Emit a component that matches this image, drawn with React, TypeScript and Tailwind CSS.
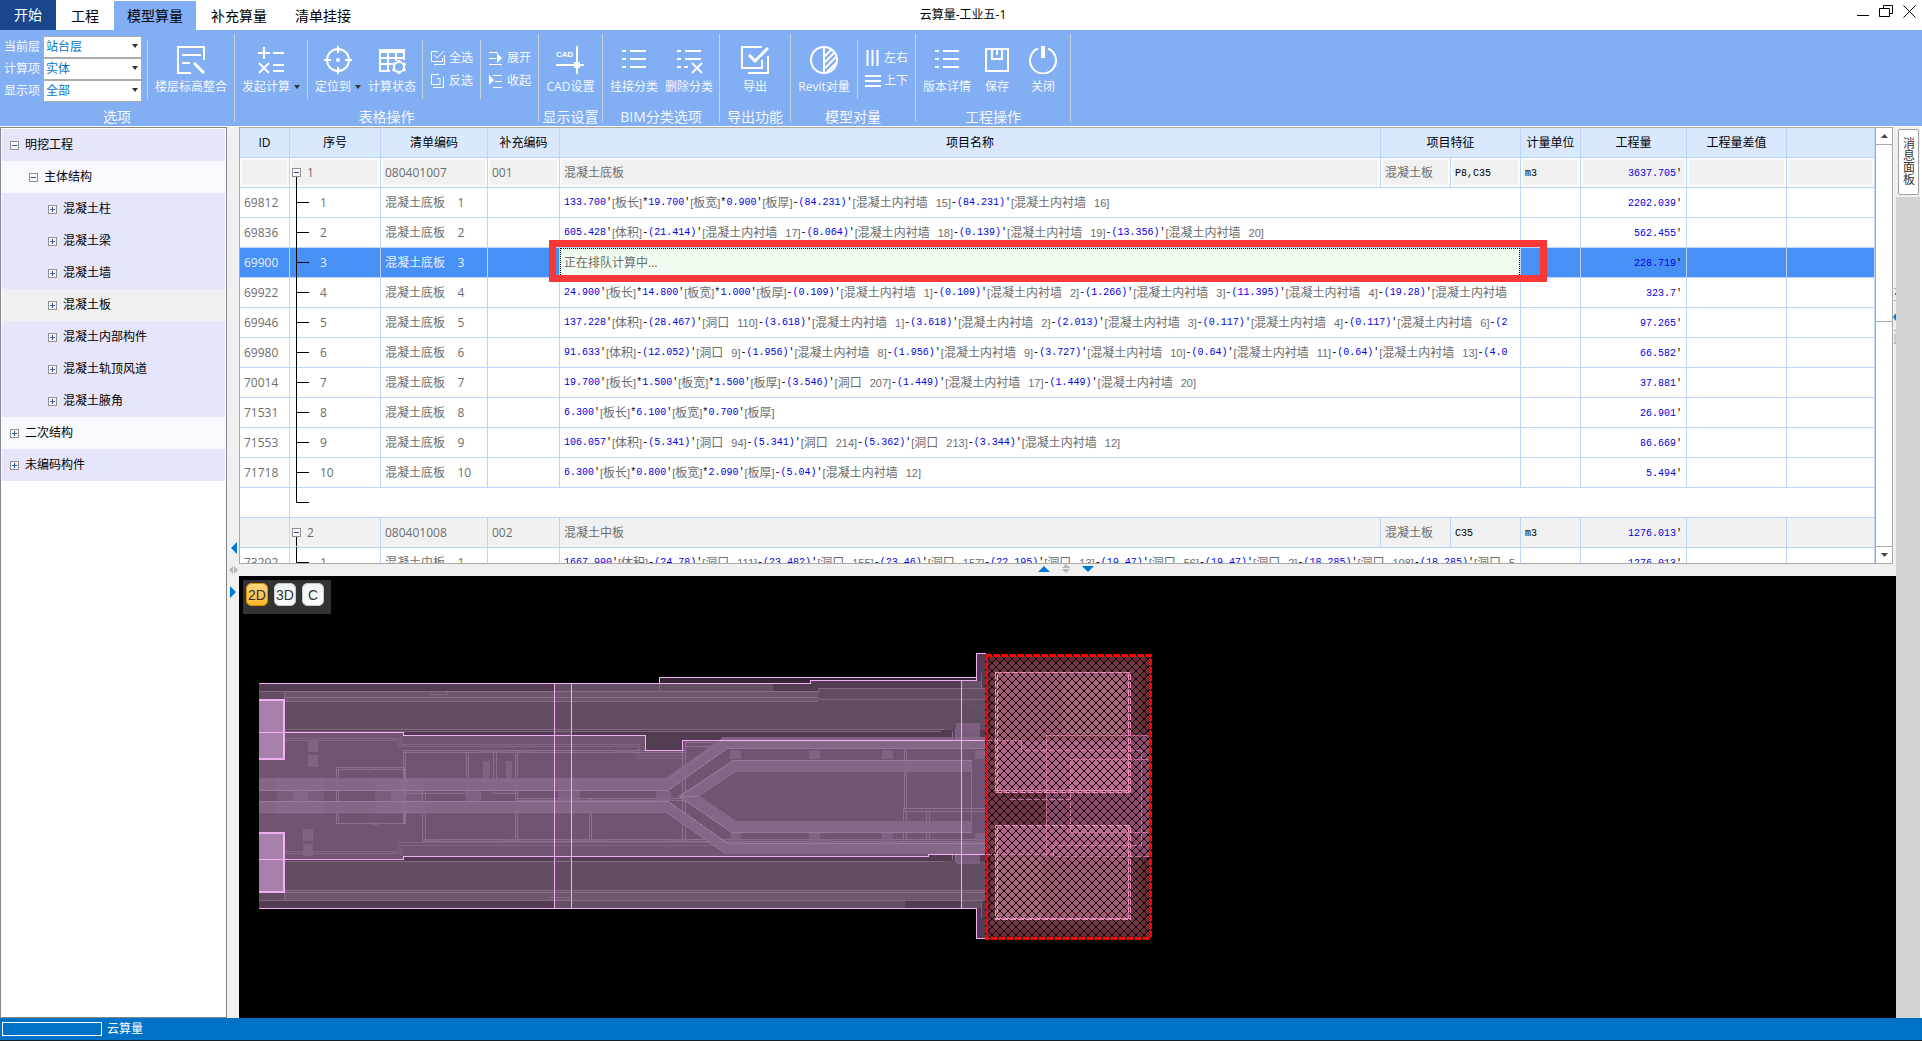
import { ReactNode } from 'react';

interface Row {
  kind: 'group' | 'item' | 'blank';
  id?: string;
  no?: string;
  code?: string;
  extra?: string;
  name?: string;
  part?: string;
  grade?: string;
  unit?: string;
  qty?: string;
  pending?: boolean;
  focused?: boolean;
  last?: boolean;
}

interface TreeNode {
  label: string;
  level: 0 | 1 | 2;
  open?: boolean;
  tone: 'base' | 'light' | 'active';
}

const TREE: TreeNode[] = [
  { label: '明挖工程', level: 0, open: true, tone: 'base' },
  { label: '主体结构', level: 1, open: true, tone: 'light' },
  { label: '混凝土柱', level: 2, tone: 'base' },
  { label: '混凝土梁', level: 2, tone: 'base' },
  { label: '混凝土墙', level: 2, tone: 'base' },
  { label: '混凝土板', level: 2, tone: 'active' },
  { label: '混凝土内部构件', level: 2, tone: 'base' },
  { label: '混凝土轨顶风道', level: 2, tone: 'base' },
  { label: '混凝土腋角', level: 2, tone: 'base' },
  { label: '二次结构', level: 0, tone: 'light' },
  { label: '未编码构件', level: 0, tone: 'base' },
];

const ROWS: Row[] = [
  { kind: 'group', no: '1', code: '080401007', extra: '001', name: '混凝土底板', part: '混凝土板', grade: 'P8,C35', unit: 'm3', qty: '3637.705', focused: true },
  { kind: 'item', id: '69812', no: '1', code: '混凝土底板', name: '133.700′[板长]*19.700′[板宽]*0.900′[板厚]-(84.231)′[混凝土内衬墙 15]-(84.231)′[混凝土内衬墙 16]', qty: '2202.039' },
  { kind: 'item', id: '69836', no: '2', code: '混凝土底板', name: '605.428′[体积]-(21.414)′[混凝土内衬墙 17]-(8.064)′[混凝土内衬墙 18]-(0.139)′[混凝土内衬墙 19]-(13.356)′[混凝土内衬墙 20]', qty: '562.455' },
  { kind: 'item', id: '69900', no: '3', code: '混凝土底板', name: '正在排队计算中...', qty: '228.719', pending: true },
  { kind: 'item', id: '69922', no: '4', code: '混凝土底板', name: '24.900′[板长]*14.800′[板宽]*1.000′[板厚]-(0.109)′[混凝土内衬墙 1]-(0.109)′[混凝土内衬墙 2]-(1.266)′[混凝土内衬墙 3]-(11.395)′[混凝土内衬墙 4]-(19.28)′[混凝土内衬墙', qty: '323.7' },
  { kind: 'item', id: '69946', no: '5', code: '混凝土底板', name: '137.228′[体积]-(28.467)′[洞口 110]-(3.618)′[混凝土内衬墙 1]-(3.618)′[混凝土内衬墙 2]-(2.013)′[混凝土内衬墙 3]-(0.117)′[混凝土内衬墙 4]-(0.117)′[混凝土内衬墙 6]-(2', qty: '97.265' },
  { kind: 'item', id: '69980', no: '6', code: '混凝土底板', name: '91.633′[体积]-(12.052)′[洞口 9]-(1.956)′[混凝土内衬墙 8]-(1.956)′[混凝土内衬墙 9]-(3.727)′[混凝土内衬墙 10]-(0.64)′[混凝土内衬墙 11]-(0.64)′[混凝土内衬墙 13]-(4.0', qty: '66.582' },
  { kind: 'item', id: '70014', no: '7', code: '混凝土底板', name: '19.700′[板长]*1.500′[板宽]*1.500′[板厚]-(3.546)′[洞口 207]-(1.449)′[混凝土内衬墙 17]-(1.449)′[混凝土内衬墙 20]', qty: '37.881' },
  { kind: 'item', id: '71531', no: '8', code: '混凝土底板', name: '6.300′[板长]*6.100′[板宽]*0.700′[板厚]', qty: '26.901' },
  { kind: 'item', id: '71553', no: '9', code: '混凝土底板', name: '106.057′[体积]-(5.341)′[洞口 94]-(5.341)′[洞口 214]-(5.362)′[洞口 213]-(3.344)′[混凝土内衬墙 12]', qty: '86.669' },
  { kind: 'item', id: '71718', no: '10', code: '混凝土底板', name: '6.300′[板长]*0.800′[板宽]*2.090′[板厚]-(5.04)′[混凝土内衬墙 12]', qty: '5.494' },
  { kind: 'blank' },
  { kind: 'group', no: '2', code: '080401008', extra: '002', name: '混凝土中板', part: '混凝土板', grade: 'C35', unit: 'm3', qty: '1276.013' },
  { kind: 'item', id: '73292', no: '1', code: '混凝土中板', name: '1667.990′[体积]-(24.78)′[洞口 111]-(23.482)′[洞口 155]-(23.46)′[洞口 157]-(22.195)′[洞口 13]-(19.47)′[洞口 56]-(19.47)′[洞口 2]-(18.285)′[洞口 108]-(18.285)′[洞口 5', qty: '1276.013', last: true },
];

const MONO = "font-['Liberation_Mono','Noto_Sans_CJK_SC',monospace] text-[10px]";
const CELL = 'h-[30px] border-r border-b border-[#bdd5fa] p-0';

/* ---------- ribbon ---------- */

function Ico({ children, size = 28 }: { children: ReactNode; size?: number }) {
  return (
    <svg width={size} height={size} viewBox={`0 0 ${size} ${size}`} fill="none" stroke="#fff" strokeWidth="2" className="shrink-0" aria-hidden>
      {children}
    </svg>
  );
}

const ICONS: Record<string, ReactNode> = {
  floor: <><path d="M27 14V1H1v26h13M5 9h19M5 17h8" /><path d="M17 17l10 10" strokeWidth="3" /></>,
  calc: <><path d="M7 1v12M1 7h12M16 7h11M16 19h11M16 25h11M2 17l10 10M12 17L2 27" /></>,
  locate: <><circle cx="14" cy="14" r="11" /><path d="M14 0v7M14 21v7M0 14h7M21 14h7" /><circle cx="14" cy="14" r="1" /></>,
  status: (
    <>
      <path d="M1 3h26v4H1z" fill="#fff" stroke="none" />
      <path d="M2 3v22h10M26 3v11M2 12h24M2 18h12M10 6v20M18 6v9" />
      <circle cx="21" cy="21" r="5" />
      <path d="M21 14v2M21 26v2M14.5 17.5l2 1M25.500 23.500l2 1M14.500 24.500l2-1M25.500 18.500l2-1" strokeWidth="3" />
    </>
  ),
  cad: (
    <>
      <path d="M21 0v28M0 19h28" />
      <path d="M18 16h6v6h-6z" fill="#fff" stroke="none" />
      <text x="0" y="11" fontSize="8" fontWeight="700" fill="#fff" stroke="none" fontFamily="Liberation Sans">CAD</text>
    </>
  ),
  list: <path d="M2 5h4M10 5h16M2 13h4M10 13h16M2 21h4M10 21h16" />,
  listDel: <path d="M2 5h4M10 5h16M2 13h4M10 13h16M2 21h4M9 21h4M17 17l10 10M27 17L17 27" />,
  exportBox: <><path d="M21 14v8H1V1h20M27 10v17H7" /><path d="M8 9l6 6L27 2" strokeWidth="3" /></>,
  compare: <><circle cx="14" cy="14" r="13" /><path d="M14 1v26M15 10l6-6M15 16l9-9M15 22l11-11M17 26l9-9" /></>,
  save: <path d="M3 3h22v22H3zM9 3v10h10V3M14 4v5" />,
  power: <><path d="M9 2.500a13 13 0 1 0 10 0" /><path d="M14 0v12" strokeWidth="4" /></>,
};

const SMALL: Record<string, ReactNode> = {
  all: <path d="M8 1.500H1.500v10h11V8M14.500 5v9.500H4M4 5l3 3 7-7" strokeWidth="1" />,
  invert: <path d="M9 1.500H1.500v10h4M7 5.500h3v6H5M13.500 4v10.500H3" strokeWidth="1" />,
  expand: <><path d="M1 2.500h9M1 8.500h7M1 14.500h13" strokeWidth="1" /><path d="M9 3l5 5-5 5z" fill="#fff" stroke="none" /></>,
  collapse: <><path d="M5 2.500h9M7 8.500h7M5 14.500h9M1.500 2v9" strokeWidth="1" /><path d="M1 2l5 5-5 5z" fill="#fff" stroke="none" /></>,
  columns: <path d="M2.500 0v16M7.500 0v16M12.500 0v16" />,
  lines: <path d="M0 3h16M0 8h16M0 13h16" />,
};

function Caret() {
  return (
    <svg width="6" height="4" viewBox="0 0 6 4" aria-hidden>
      <path d="M0 0h6L3 4z" fill="#333" />
    </svg>
  );
}

function BigButton({ icon, label, caret }: { icon: string; label: string; caret?: boolean }) {
  return (
    <button type="button" className="flex flex-col items-center gap-1">
      <Ico>{ICONS[icon]}</Ico>
      <span className="flex items-center gap-1 text-xs leading-[18px] whitespace-nowrap">
        {label}
        {caret && <Caret />}
      </span>
    </button>
  );
}

function SmallButton({ icon, label }: { icon: string; label: string }) {
  return (
    <button type="button" className="flex items-center gap-[3px] text-xs leading-4 whitespace-nowrap">
      <Ico size={16}>{SMALL[icon]}</Ico>
      {label}
    </button>
  );
}

function Divider() {
  return <div className="mt-[6px] h-[59px] w-px bg-[#c9d2e2]" />;
}

function RibbonGroup({ title, width, children }: { title: string; width: string; children: ReactNode }) {
  return (
    <section className={`flex shrink-0 flex-col border-r border-[#c9d2e2] ${width}`}>
      <div className="flex h-[74px] shrink-0">{children}</div>
      <h2 className="h-3.5 text-center text-sm leading-[18px] whitespace-nowrap">{title}</h2>
    </section>
  );
}

function Slot({ width, children }: { width: string; children: ReactNode }) {
  return <div className={`flex shrink-0 justify-center pt-3 ${width}`}>{children}</div>;
}

function Combo({ id, label, value }: { id: string; label: string; value: string }) {
  return (
    <div className="flex h-[22px] items-center">
      <label htmlFor={id} className="w-[39px] text-xs">{label}</label>
      <div className="relative">
        <select id={id} className="block h-[22px] w-[99px] appearance-none border border-[#ababab] bg-white pl-0.5 text-xs leading-4 text-[#0072c6]">
          <option>{value}</option>
        </select>
        <span className="pointer-events-none absolute top-2 right-1 flex">
          <Caret />
        </span>
      </div>
    </div>
  );
}

function Ribbon() {
  return (
    <div className="flex h-24 shrink-0 bg-[#82aef3] py-1 text-[#f4f8ff]">
      <RibbonGroup title="选项" width="w-[235px]">
        <div className="flex w-[147px] flex-col pt-0.5 pl-1">
          <Combo id="floor" label="当前层" value="站台层" />
          <Combo id="calc" label="计算项" value="实体" />
          <Combo id="show" label="显示项" value="全部" />
        </div>
        <Divider />
        <Slot width="w-[86px]"><BigButton icon="floor" label="楼层标高整合" /></Slot>
      </RibbonGroup>
      <RibbonGroup title="表格操作" width="w-[304px]">
        <Slot width="w-[72px]"><BigButton icon="calc" label="发起计算" caret /></Slot>
        <Divider />
        <Slot width="w-[60px]"><BigButton icon="locate" label="定位到" caret /></Slot>
        <Slot width="w-[48px]"><BigButton icon="status" label="计算状态" /></Slot>
        <div className="w-1.5" />
        <Divider />
        <div className="flex w-[57px] flex-col items-center gap-[7px] pt-4">
          <SmallButton icon="all" label="全选" />
          <SmallButton icon="invert" label="反选" />
        </div>
        <Divider />
        <div className="flex w-[57px] flex-col items-center gap-[7px] pt-4">
          <SmallButton icon="expand" label="展开" />
          <SmallButton icon="collapse" label="收起" />
        </div>
      </RibbonGroup>
      <RibbonGroup title="显示设置" width="w-[64px]">
        <Slot width="w-[63px]"><BigButton icon="cad" label="CAD设置" /></Slot>
      </RibbonGroup>
      <RibbonGroup title="BIM分类选项" width="w-[117px]">
        <Slot width="w-[62px]"><BigButton icon="list" label="挂接分类" /></Slot>
        <Slot width="w-[48px]"><BigButton icon="listDel" label="删除分类" /></Slot>
      </RibbonGroup>
      <RibbonGroup title="导出功能" width="w-[71px]">
        <Slot width="w-[70px]"><BigButton icon="exportBox" label="导出" /></Slot>
      </RibbonGroup>
      <RibbonGroup title="模型对量" width="w-[125px]">
        <Slot width="w-[66px]"><BigButton icon="compare" label="Revit对量" /></Slot>
        <Divider />
        <div className="flex w-[57px] flex-col items-center gap-[7px] pt-4">
          <SmallButton icon="columns" label="左右" />
          <SmallButton icon="lines" label="上下" />
        </div>
      </RibbonGroup>
      <RibbonGroup title="工程操作" width="w-[155px]">
        <Slot width="w-[62px]"><BigButton icon="list" label="版本详情" /></Slot>
        <Slot width="w-[38px]"><BigButton icon="save" label="保存" /></Slot>
        <Slot width="w-[54px]"><BigButton icon="power" label="关闭" /></Slot>
      </RibbonGroup>
    </div>
  );
}

/* ---------- title bar ---------- */

function TitleBar() {
  return (
    <header className="grid h-[30px] shrink-0 grid-cols-[1fr_auto_1fr] bg-white text-black">
      <nav className="flex items-end text-sm leading-[26px]">
        <button type="button" className="h-[30px] w-14 bg-[#18478b] text-white">开始</button>
        <button type="button" className="h-[29px] w-[58px]">工程</button>
        <button type="button" className="h-[29px] w-[82px] bg-[#82aef3]">模型算量</button>
        <button type="button" className="h-[29px] w-[86px]">补充算量</button>
        <button type="button" className="h-[29px] w-[82px]">清单挂接</button>
      </nav>
      <h1 className="pl-1 text-xs leading-[30px]">云算量-工业五-1</h1>
      <div className="flex items-start justify-end gap-[9px] pt-[5px] pr-[6px]">
        <button type="button" aria-label="最小化">
          <svg width="13" height="13" viewBox="0 0 13 13"><path d="M0 10.500h12" stroke="#000" /></svg>
        </button>
        <button type="button" aria-label="还原">
          <svg width="15" height="13" viewBox="0 0 15 13" fill="none" stroke="#000"><path d="M.5 3.500h10v8H.500zM4.500 3V.500h9v8H11" /></svg>
        </button>
        <button type="button" aria-label="关闭窗口">
          <svg width="13" height="13" viewBox="0 0 13 13"><path d="M.5.5l12 12M12.500.5l-12 12" stroke="#000" /></svg>
        </button>
      </div>
    </header>
  );
}

/* ---------- tree ---------- */

function Toggle({ open }: { open?: boolean }) {
  return (
    <svg width="9" height="9" viewBox="0 0 9 9" className="block" aria-hidden>
      <rect x=".5" y=".5" width="8" height="8" fill="#f6f6f6" stroke="#919191" />
      <path d={open ? 'M2 4.500h5' : 'M2 4.500h5M4.500 2v5'} stroke="#3a55a0" />
    </svg>
  );
}

const LEVEL = { 0: 'pl-2', 1: 'pl-[27px]', 2: 'pl-[46px]' };
const TONE = { base: 'bg-[#e6e6fa]', light: 'bg-[#f8f8ff]', active: 'bg-[#f0f0f0]' };

function TreePanel() {
  return (
    <aside className="w-[227px] shrink-0 border border-[#828790] bg-white p-px">
      <ul>
        {TREE.map(n => (
          <li key={n.label} className={`flex h-8 items-center gap-1.5 text-xs text-black ${LEVEL[n.level]} ${TONE[n.tone]}`}>
            <button type="button" aria-label={n.open ? '收起' : '展开'}><Toggle open={n.open} /></button>
            {n.label}
          </li>
        ))}
      </ul>
    </aside>
  );
}

/* ---------- grid ---------- */

function Formula({ text }: { text: string }) {
  const tokens = text.match(/\[[^\]]*\]?|\(?[\d.]+\)?|./g) || [];
  return (
    <div className={`flex items-center overflow-hidden pr-2 pl-1 whitespace-pre text-black ${MONO}`}>
      {tokens.map((t, i) => {
        if (t[0] === '[') {
          const [name, num] = t.replace(/[[\]]/g, '').split(' ');
          return (
            <span key={i} className="flex items-center font-['Liberation_Sans','Noto_Sans_CJK_SC',sans-serif] text-[11px] text-[#6d6d6d]">
              [<span className="text-xs">{name}</span>
              {num && <span className="pl-2">{num}</span>}
              {t.endsWith(']') && ']'}
            </span>
          );
        }
        return <span key={i} className={/\d/.test(t) ? 'text-[#0000e6]' : ''}>{t}</span>;
      })}
    </div>
  );
}

// branch lines of the outline column
function Branch({ row }: { row: Row }) {
  const d = row.kind === 'group' ? 'M6.500 19V28' : row.kind === 'blank' || row.last ? 'M6.500 -1V14.500H19' : 'M6.500 -2V29M6.500 14.500H19';
  return (
    <div className="flex h-[29px] items-center">
      <svg width="19" height="29" viewBox="0 0 19 29" className="shrink-0 overflow-visible" fill="none" aria-hidden>
        <path d={d} stroke="#000" />
        {row.kind === 'group' && (
          <>
            <rect x="2.500" y="10.500" width="8" height="8" fill="#f6f6f6" stroke="#919191" />
            <path d="M4 14.500h5" stroke="#3a55a0" />
          </>
        )}
      </svg>
      <span className={row.kind === 'group' ? '-ml-0.5' : 'pl-[11px]'}>{row.no}</span>
    </div>
  );
}

function Quantity({ value, className }: { value?: string; className: string }) {
  return (
    <td className={`${className} pr-1 text-right`}>
      <span className={`${MONO} text-[#0000e6]`}>{value}<span className="text-black">′</span></span>
    </td>
  );
}

function GridRow({ row }: { row: Row }) {
  if (row.kind === 'blank') {
    return (
      <tr>
        <td className={CELL} />
        <td colSpan={10} className={CELL}><Branch row={row} /></td>
      </tr>
    );
  }

  if (row.kind === 'group') {
    const cell = `${CELL} bg-[#f1f1f1] ${row.focused ? 'shadow-[inset_0_0_0_2px_#fafafa]' : ''}`;
    return (
      <tr>
        <td className={cell} />
        <td className={cell}><Branch row={row} /></td>
        <td className={`${cell} pl-1`}>{row.code}</td>
        <td className={`${cell} pl-1`}>{row.extra}</td>
        <td className={`${cell} pl-1`}>{row.name}</td>
        <td className={`${cell} pl-1`}>{row.part}</td>
        <td className={`${cell} pl-1`}><span className={`${MONO} text-black`}>{row.grade}</span></td>
        <td className={`${cell} pl-1`}><span className={`${MONO} text-black`}>{row.unit}</span></td>
        <Quantity className={cell} value={row.qty} />
        <td className={cell} />
        <td className={cell} />
      </tr>
    );
  }

  return (
    <tr className={row.pending ? 'bg-[#4790f5] text-[#e8f1ff]' : 'bg-white'}>
      <td className={`${CELL} pl-1`}>{row.id}</td>
      <td className={CELL}><Branch row={row} /></td>
      <td className={`${CELL} pl-1 whitespace-pre`}>{`${row.code}    ${row.no}`}</td>
      <td className={CELL} />
      <td colSpan={3} className={`${CELL} relative`}>
        {row.pending ? (
          <>
            <div className="h-[29px] border border-dotted border-black bg-[#effcef] pl-[3px] leading-7 text-[#6d6d6d]">{row.name}</div>
            <div className="pointer-events-none absolute -top-2 -right-[27px] -bottom-[5px] -left-[11px] z-10 border-[7px] border-[#fb3838]" />
          </>
        ) : (
          <Formula text={row.name || ''} />
        )}
      </td>
      <td className={CELL} />
      <Quantity className={CELL} value={row.qty} />
      <td className={CELL} />
      <td className={CELL} />
    </tr>
  );
}

function Grid() {
  return (
    <div className="flex h-[437px] shrink-0 border border-[#a9a9a9] bg-white">
      <div className="flex-1 overflow-hidden">
        <table className="w-full table-fixed border-separate border-spacing-0 text-xs leading-4 text-[#6d6d6d]">
          <colgroup>
            <col className="w-[50px]" />
            <col className="w-[91px]" />
            <col className="w-[107px]" />
            <col className="w-[72px]" />
            <col />
            <col className="w-[70px]" />
            <col className="w-[70px]" />
            <col className="w-[60px]" />
            <col className="w-[106px]" />
            <col className="w-[100px]" />
            <col className="w-[88px]" />
          </colgroup>
          <thead className="bg-[#d9e8fc] text-black">
            <tr>
              {['ID', '序号', '清单编码', '补充编码', '项目名称', '项目特征', '计量单位', '工程量', '工程量差值', ''].map(h => (
                <th key={h} colSpan={h === '项目特征' ? 2 : 1} className={`${CELL} font-normal`}>{h}</th>
              ))}
            </tr>
          </thead>
          <tbody>
            {ROWS.map((row, i) => <GridRow key={i} row={row} />)}
          </tbody>
        </table>
      </div>
      <div className="flex w-[17px] flex-col border-l border-[#a9a9a9] bg-white">
        <button type="button" aria-label="向上滚动" className="flex h-[17px] items-center justify-center border-b border-[#a9a9a9]">
          <svg width="7" height="4" viewBox="0 0 7 4"><path d="M0 4h7L3.500 0z" fill="#444" /></svg>
        </button>
        <div className="h-[177px] border-b border-[#a9a9a9]" />
        <button type="button" aria-label="向下滚动" className="mt-auto flex h-[17px] items-center justify-center border-t border-[#a9a9a9]">
          <svg width="7" height="4" viewBox="0 0 7 4"><path d="M0 0h7L3.500 4z" fill="#444" /></svg>
        </button>
      </div>
    </div>
  );
}

/* ---------- plan drawing ---------- */

const EDGE = '#f2b0f2';
const FAINT = '#8d708f';
const PILLARS = [730, 809, 882, 975];

function PlanDrawing() {
  return (
    <svg width="896" height="292" viewBox="259 652 896 292" className="mt-[37px] ml-4 block" fill="none" shapeRendering="crispEdges" role="img" aria-label="平面图">
      <defs>
        <pattern id="hatch" width="8" height="8" patternUnits="userSpaceOnUse">
          <path d="M0 0l8 8M8 0l-8 8" stroke="#000" strokeWidth="1.300" />
        </pattern>
      </defs>

      {/* slab body */}
      <path d="M659 678h318v7H659z" fill="#342634" />
      <path d="M259 684h551v-3h167v-27h9v286h-9v-31H259z" fill="#523c52" />
      <path d="M259 702h727v29H259zM259 862h727v29H259zM259 692h25v10h-25zM259 891h25v10h-25zM818 689h168v14H818z" fill="#624d62" />
      <path d="M284 692h534v10H284zM284 891h702v10H284z" fill="#6d566e" />
      <path d="M554 685h219v7H554zM554 901h351v8H554zM962 682h20v27h-20zM962 901h20v8h-20z" fill="#654f65" />
      <path d="M554 731h17v5h-17zM554 858h17v4h-17z" fill="#604a60" />
      <path d="M259 733.500h144v3h242v15h37v-10h304v114h-57v2H403v3H259z" fill="#725472" />

      {/* secondary outlines */}
      <g stroke={FAINT}>
        <path d="M259 692.500h559M284 698.500h534M259 702.500h559M259 730.500h686M259 732.500h682M259 862.500h686M259 891.500h727M259 893.500h727M259 901.500h727M284.500 692v9M284.500 892v9" opacity=".8" />
        <path d="M812 692.500h6v-3h168M818 700.500h168M430.500 692v3h17v-3M549.500 901v-3h19v3M659.500 684v8M981.500 674v17M981.500 904v15" opacity=".7" />
        <path d="M259 739.500h142v6h238v11h46M259 741.500h139v6h239v12h48M259 852.500h139v-9h587M259 854.500h142v-8h584" opacity=".6" />
        <path d="M336.500 768.500h68v56h-68zM338.500 770.500h66M338.500 770v53" />
        <path d="M403.500 751.500h282M403.500 753.500h282M403.500 751v43h65v-43M405.500 753v41M466.500 753v41M493.500 751v43h24M496.500 753v39M515.500 751v91M517.500 751v91" />
        <path d="M403.500 801v24M405.500 801v24M422.500 792v49M425.500 792v49M422 840.500h562M422 842.500h562M589.500 799v42M591.500 799v42M517 799.500h170M517 801.500h170" />
        <path d="M682.500 741v100M685.500 741v100M685 743.500h300M685 747.500h300" />
        <path d="M904.500 743v68M906.500 743v68M904 809.500h82M904 812.500h82M903.500 809v33M906.500 812v30M926.500 812v30M929.500 812v30M971.500 762v70M904 783.500h3M904 796.500h3" />
        <path d="M952.500 732v9M955.500 730v11M952.500 842v19M955.500 842v21" />
      </g>
      <g fill="#866789" opacity=".75">
        <path d="M421 751h4v3h-4zM479 751h31v3h-31zM515 751h19v3h-19zM612 751h22v3h-22zM372 768h7v3h-7zM372 823h7v3h-7zM422 840h20v3h-20zM499 840h18v3h-18zM569 840h38v3h-38zM666 840h22v3h-22zM819 840h16v3h-16z" />
        <path d="M308 741h10v12h-10zM308 756h10v12h-10zM303 830h10v12h-10zM303 845h10v12h-10zM483 762h7v23h-7zM506 762h6v23h-6z" />
        <path d="M293 792h15v10h-15zM391 792h15v10h-15zM466 792h15v10h-15zM558 790h22v12h-22zM656 792h15v10h-15z" />
        {PILLARS.map(x => (
          <path key={x} d={`M${x} 751h11v9h-11zM${x} 834h11v9h-11z`} />
        ))}
        <path d="M956 724h24v17h-24zM956 843h24v22h-24z" />
      </g>

      {/* running tracks */}
      <g fill="#866889" opacity=".9">
        <path d="M259 779h407l57-41h263v11H728l-61 43H259z" />
        <path d="M259 802h409l60 42h258v11H725l-59-41H259z" />
        <path d="M679 797l54-36h239v12H736l-36 24 36 25h236v12H732z" />
      </g>
      <g fill="#94759a" opacity=".25">
        <path d="M277 779h47v36h-47zM375 779h47v36h-47z" />
      </g>
      <g stroke="#a183a5" opacity=".7">
        <path d="M259 791.500h409l59-42h259M259 802.500h409l60 42h258M972 761.500H733l-54 36h20M972 833.500H732l-53-36" />
        <path d="M259 781.500h408l57-41M259 813.500h408l58 41" opacity=".4" />
      </g>

      {/* entrance boxes */}
      <path d="M259 701h25v59h-25zM259 834h25v59h-25z" fill="#a880ac" />
      <path d="M259 701h25v59h-25M259 834h25v59h-25" stroke={EDGE} strokeWidth="2" />

      {/* main outlines */}
      <g stroke={EDGE}>
        <path d="M259 684.500h551.500v-3h166M659.500 684v-5.500h317M986 654.500h-9.500v27M259 909.500h717.500v30h9.500" />
        <path d="M259 733.500h144.500v3h242v15h37v-10H986M259 860.500h144.500v-3h525v-2H986" />
        <path d="M554.500 684v225M571.500 684v225M961.500 681v228" />
      </g>

      {/* selected slab */}
      <path d="M985 655h166v285H985z" fill="#6b2b38" />
      <path d="M991 663h150v267H991z" fill="#743846" />
      <path d="M986 736h164v122H986z" fill="#7b3a4e" />
      <path d="M1045 736h105v122h-105z" fill="#92486a" />
      <path d="M996 673h134v120H996zM996 827h134v94H996z" fill="#a65a78" />
      <path d="M1062 680h62v55h-62zM996 858h47v62h-47z" fill="#ad667e" />
      <path d="M996 742h134v51H996zM996 827h134v29H996z" fill="#b9648c" />
      <path d="M1070 760h60v33h-60zM1070 827h60v6h-60z" fill="#c46b95" />
      <path d="M986 793h60v34h-60z" fill="#78344a" />
      <path d="M985 655h166v285H985z" fill="url(#hatch)" />
      <g stroke="#f08cc0" strokeDasharray="6 2">
        <path d="M995.500 673.500h135v120h-135zM997.500 675v118M1128.500 675v118M996 791.500h134M995.500 826.500h135v94h-135zM997.500 828v92M1128.500 828v92M996 919.500h134" />
        <path d="M986 741.500h35.500v10H1141v95h-87.500v11H1151M986 855.500h67M1046.500 858V736.500H1151M1070.500 833V760.500H1151M1070 833.500h80M1010 800.500h60" opacity=".7" />
      </g>
      <path d="M986 656h164v283H986z" stroke="#f00" strokeWidth="3" strokeDasharray="6 2" />
    </svg>
  );
}

function Viewport() {
  return (
    <div className="flex-1 overflow-hidden bg-black p-1">
      <div className="flex h-[34px] w-[88px] gap-1.5 bg-[#333] p-[3px] font-['Liberation_Sans',sans-serif] text-sm leading-[22px] text-[#333]">
        <button type="button" className="h-[23px] w-[22px] rounded-md bg-linear-to-b from-[#fbd980] to-[#fbb616] ring-1 ring-[#d8920c] ring-inset">2D</button>
        <button type="button" className="h-[23px] w-[22px] rounded-md bg-linear-to-b from-[#eef1f5] to-[#fff] ring-1 ring-[#c3c9d0] ring-inset">3D</button>
        <button type="button" className="h-[23px] w-[22px] rounded-md bg-linear-to-b from-[#eef1f5] to-[#fff] ring-1 ring-[#c3c9d0] ring-inset">C</button>
      </div>
      <PlanDrawing />
    </div>
  );
}

/* ---------- shell ---------- */

export default function App() {
  return (
    <div className="flex h-screen flex-col overflow-hidden bg-[#f0f0f0] font-['Open_Sans','Noto_Sans_CJK_SC',sans-serif]">
      <TitleBar />
      <Ribbon />
      <main className="flex min-h-0 flex-1 border-t border-white">
        <TreePanel />
        <div className="flex w-3 shrink-0 flex-col items-center justify-center pb-1.5">
          <svg width="9" height="58" viewBox="0 0 9 58" aria-hidden>
            <path d="M8 1v12L2 7zM1 45v12l6-6z" fill="#0078d7" />
            <path d="M4 25v8l-4-4zM5 25v8l4-4z" fill="#b5b5b5" />
          </svg>
        </div>
        <div className="flex min-w-0 flex-1">
          <div className="flex min-w-0 flex-1 flex-col">
            <div className="flex">
              <div className="flex min-w-0 flex-1 flex-col">
                <Grid />
                <div className="flex h-3 items-start justify-center">
                  <svg width="56" height="9" viewBox="0 0 56 9" aria-hidden>
                    <path d="M0 8h12L6 2zM44 2h12l-6 6z" fill="#0078d7" />
                    <path d="M24 4h8l-4-4zM24 5h8l-4 4z" fill="#b5b5b5" />
                  </svg>
                </div>
              </div>
              <div className="flex w-[3px] items-center">
                <svg width="3" height="56" viewBox="0 0 3 56" className="mb-[72px]" aria-hidden>
                  <path d="M1 .5h2M1 12.500h2M1 42.500h2M2 46v9M1 55.500h2" stroke="#a9a9a9" />
                  <path d="M2 5h1v2H2zM0 29l3-4v8z" fill="#0078d7" />
                </svg>
              </div>
            </div>
            <Viewport />
          </div>
          <div className="flex w-6 shrink-0 flex-col bg-[#f0f0f0]">
            <button type="button" className="mt-0.5 ml-0.5 h-[66px] w-[21px] rounded-xs border border-[#a0a0a0] bg-white px-1 text-xs leading-3 text-[#333]">
              消息面板
            </button>
            <div className="mt-0.5 flex-1 bg-[#d3d3d3]" />
          </div>
          <div className="w-0.5 shrink-0 bg-white" />
        </div>
      </main>
      <footer className="flex h-[23px] shrink-0 items-center gap-[5px] border-b border-[#12202c] bg-[#0072c6] pl-0.5 text-xs text-white">
        <div className="h-3.5 w-[100px] border border-white" />
        云算量
      </footer>
    </div>
  );
}
